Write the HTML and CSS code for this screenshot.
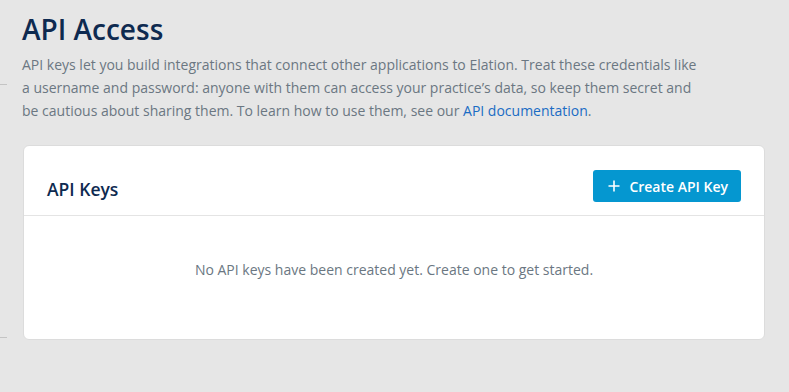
FILE: index.html
```html
<!DOCTYPE html>
<html>
<head>
    <title>API Access</title>
    <link rel="stylesheet" href="styles.css">
</head>
<body>
    <div class="edge-mark top"></div>
    <div class="edge-mark bottom"></div>
    <div class="page">
        <h1>API Access</h1>
        <p class="intro">
            API keys let you build integrations that connect other applications to Elation. Treat these credentials like<br>
            a username and password: anyone with them can access your practice&rsquo;s data, so keep them secret and<br>
            be cautious about sharing them. To learn how to use them, see our <a href="#">API documentation</a>.
        </p>

        <div class="card">
            <div class="card-header">
                <h2>API Keys</h2>
                <button class="btn-create" type="button">
                    <svg width="12" height="12" viewBox="0 0 12 12">
                        <path d="M6 0.5v11M0.5 6h11" stroke="#fff" stroke-width="1.6" fill="none"/>
                    </svg>
                    Create API Key
                </button>
            </div>
            <div class="card-body">
                No API keys have been created yet. Create one to get started.
            </div>
        </div>
    </div>
</body>
</html>
```

FILE: styles.css
```css
body {
    font-family: "Open Sans", Arial, sans-serif;
    background-color: #e6e6e6;
    margin: 0;
    padding: 0;
    color: #6b7782;
}
.page {
    padding: 10px 24px 0 22px;
}
.edge-mark {
    position: absolute;
    left: 0;
    width: 7px;
    height: 1px;
    background-color: #c4c4c4;
}
.edge-mark.top {
    top: 84px;
}
.edge-mark.bottom {
    top: 337px;
}
h1 {
    color: #0e2a50;
    font-size: 28px;
    font-weight: 600;
    margin: 0;
    line-height: 38px;
}
.intro {
    font-size: 14px;
    line-height: 23px;
    margin: 5px 0 0 0;
    white-space: nowrap;
}
a {
    color: #1a6cc4;
    text-decoration: none;
}
.card {
    background-color: #fff;
    border: 1px solid #dcdcdc;
    border-radius: 6px;
    margin: 23px 0 0 1px;
    width: 740px;
}
.card-header {
    display: flex;
    justify-content: space-between;
    align-items: flex-end;
    padding: 24px 23px 13px 23px;
    border-bottom: 1px solid #e4e4e4;
}
h2 {
    color: #0e2a50;
    font-size: 17.5px;
    font-weight: 600;
    margin: 0;
    line-height: 26px;
}
.btn-create {
    display: flex;
    align-items: center;
    gap: 9px;
    background-color: #0597d0;
    color: #fff;
    border: none;
    border-radius: 3px;
    height: 32px;
    padding: 0 13px 0 15px;
    font-family: "Open Sans", Arial, sans-serif;
    font-size: 14px;
    font-weight: 600;
    cursor: pointer;
}
.card-body {
    text-align: center;
    font-size: 14px;
    padding: 44px 0 59px 0;
    line-height: 20px;
}
```
